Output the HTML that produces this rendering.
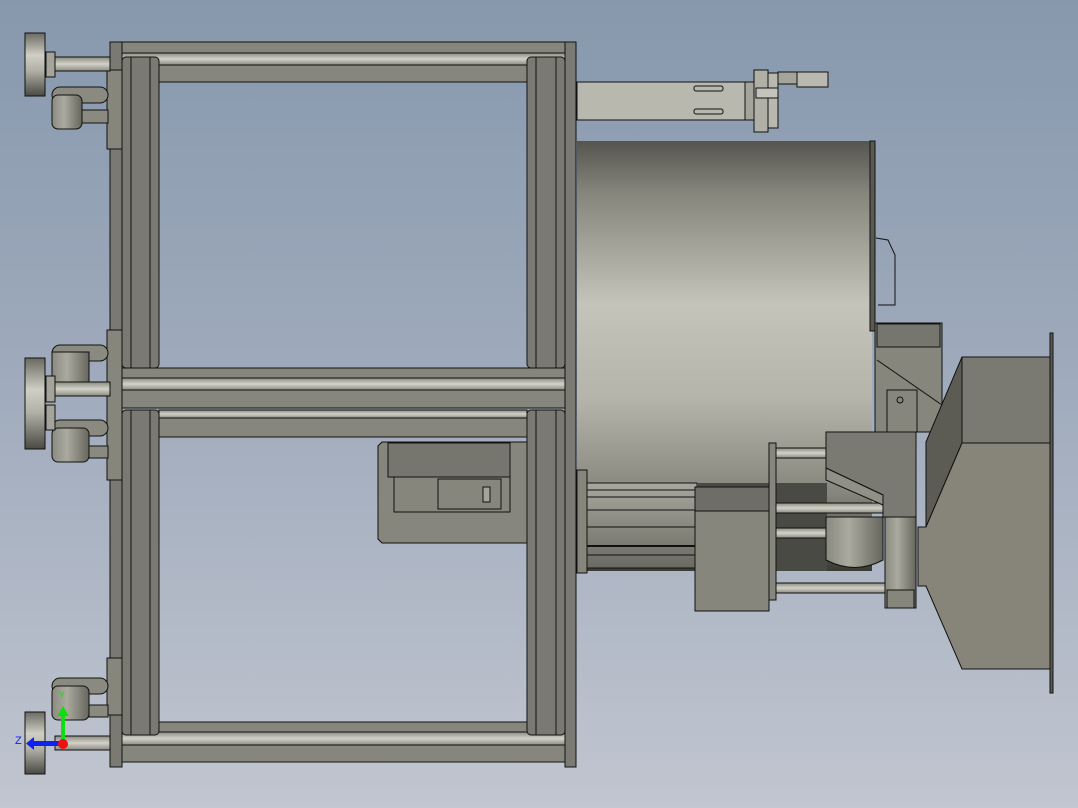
<!DOCTYPE html>
<html><head><meta charset="utf-8"><style>
html,body{margin:0;padding:0;width:1078px;height:808px;overflow:hidden}
svg{display:block}
text{font-family:"Liberation Sans",sans-serif}
</style></head><body>
<svg width="1078" height="808" viewBox="0 0 1078 808" xmlns="http://www.w3.org/2000/svg">
<defs>
<linearGradient id="bg" x1="0" y1="0" x2="0" y2="1">
<stop offset="0" stop-color="#8798ad"/><stop offset="0.5" stop-color="#a1acbd"/><stop offset="1" stop-color="#c1c6d0"/></linearGradient>
<linearGradient id="drum" x1="0" y1="0" x2="0" y2="1">
<stop offset="0" stop-color="#55554f"/><stop offset="0.12" stop-color="#85857c"/><stop offset="0.38" stop-color="#c4c4ba"/><stop offset="0.6" stop-color="#b4b4aa"/><stop offset="0.82" stop-color="#86867d"/><stop offset="1" stop-color="#3c3c36"/></linearGradient>
<linearGradient id="tubeH" x1="0" y1="0" x2="0" y2="1">
<stop offset="0" stop-color="#8a8a80"/><stop offset="0.5" stop-color="#d2d2c8"/><stop offset="1" stop-color="#8a8a80"/></linearGradient>
<linearGradient id="disc" x1="0" y1="0" x2="0" y2="1">
<stop offset="0" stop-color="#6a6a62"/><stop offset="0.35" stop-color="#cfcfc5"/><stop offset="0.6" stop-color="#b0b0a6"/><stop offset="1" stop-color="#4a4a44"/></linearGradient>
<linearGradient id="cylV" x1="0" y1="0" x2="1" y2="0">
<stop offset="0" stop-color="#8a8a80"/><stop offset="0.4" stop-color="#aaaa9f"/><stop offset="1" stop-color="#66665e"/></linearGradient>
<linearGradient id="rail" x1="0" y1="0" x2="0" y2="1">
<stop offset="0" stop-color="#a8a89e"/><stop offset="1" stop-color="#6a6a62"/></linearGradient>
</defs>
<rect width="1078" height="808" fill="url(#bg)"/>
<g stroke="#111" stroke-width="1">
<!-- drum -->
<rect x="577" y="141" width="295" height="430" fill="url(#drum)" stroke="none"/>
<rect x="870" y="141" width="5" height="190" fill="#5a5a54"/>
<!-- upper right box behind -->
<rect x="875" y="323" width="67" height="109" fill="#86867c"/>
<rect x="877" y="324" width="63" height="23" fill="#76766e"/>
<line x1="877" y1="360" x2="942" y2="405"/>
<!-- handle -->
<path d="M876 238 L888 240 L895 255 L895 305 L878 305" fill="none"/>
<!-- rails under drum -->
<rect x="587" y="483" width="110" height="85" fill="url(#rail)"/>
<line x1="587" y1="490" x2="697" y2="490"/><line x1="587" y1="497" x2="697" y2="497"/>
<line x1="587" y1="510" x2="697" y2="510"/><line x1="587" y1="527" x2="697" y2="527"/>
<line x1="587" y1="546" x2="697" y2="546" stroke-width="2"/><line x1="587" y1="555" x2="697" y2="555"/>
<rect x="577" y="470" width="10" height="103" fill="#86867c"/>
<rect x="697" y="483" width="130" height="88" fill="#4a4a44" stroke="none"/>
<!-- motor box -->
<rect x="695" y="487" width="74" height="124" fill="#86867c"/>
<rect x="695" y="487" width="74" height="24" fill="#6e6e66"/>
<rect x="769" y="443" width="7" height="157" fill="#86867c"/>
<!-- rods -->
<rect x="776" y="448" width="50" height="10" fill="url(#tubeH)"/>
<rect x="776" y="503" width="110" height="10" fill="url(#tubeH)"/>
<rect x="776" y="528" width="50" height="10" fill="url(#tubeH)"/>
<rect x="776" y="583" width="110" height="10" fill="url(#tubeH)"/>
<!-- cylinders -->
<path d="M826 517 L883 517 L883 560 Q855 575 826 560 Z" fill="url(#cylV)"/>
<rect x="885" y="517" width="31" height="91" fill="url(#cylV)"/>
<rect x="887" y="590" width="27" height="18" fill="#86867c"/>
<!-- hopper -->
<rect x="1050" y="333" width="3" height="360" fill="#5a5a54"/>
<rect x="962" y="357" width="88" height="86" fill="#7a7a72"/>
<polygon points="962,357 926,442 926,527 962,443" fill="#5c5c54"/>
<polygon points="962,443 1050,443 1050,669 962,669 926,586 918,586 918,527 926,527" fill="#87857a"/>
<!-- bracket -->
<rect x="887" y="390" width="30" height="42" fill="#86867c"/>
<circle cx="900" cy="400" r="3" fill="none"/>
<polygon points="826,432 916,432 916,517 883,517 883,495 826,468" fill="#7a7a72"/>
<polygon points="826,468 883,495 883,505 826,480" fill="#909086"/>
<!-- arm -->
<rect x="577" y="82" width="170" height="38" fill="#b8b8ae"/>
<rect x="694" y="86" width="29" height="5" rx="2" fill="none"/>
<rect x="694" y="109" width="29" height="5" rx="2" fill="none"/>
<rect x="745" y="82" width="10" height="38" fill="#a4a49a"/>
<rect x="754" y="70" width="14" height="62" fill="#b0b0a6"/>
<rect x="768" y="73" width="10" height="55" fill="#b8b8ae"/>
<rect x="756" y="88" width="22" height="10" fill="#c4c4ba"/>
<rect x="778" y="72" width="20" height="12" fill="#a4a49a"/>
<rect x="797" y="72" width="31" height="15" fill="#b8b8ae"/>
<!-- control box -->
<path d="M382 442 L527 442 L527 543 L382 543 L378 539 L378 446 Z" fill="#86867c"/>
<rect x="388" y="443" width="122" height="34" fill="#76766e"/>
<rect x="394" y="477" width="116" height="35" fill="#86867c"/>
<rect x="438" y="479" width="63" height="30" fill="#86867c"/>
<rect x="483" y="487" width="7" height="15" fill="#a4a49a"/>
<!-- FRAME -->
<!-- top bars -->
<rect x="122" y="42" width="443" height="11" fill="#86867c"/>
<rect x="122" y="53" width="443" height="12" fill="url(#tubeH)"/>
<rect x="159" y="65" width="368" height="17" fill="#86867c"/>
<!-- middle bars -->
<rect x="122" y="368" width="443" height="10" fill="#86867c"/>
<rect x="122" y="378" width="443" height="12" fill="url(#tubeH)"/>
<rect x="122" y="390" width="443" height="18" fill="#86867c"/>
<rect x="159" y="410" width="368" height="8" fill="url(#tubeH)"/>
<rect x="159" y="418" width="368" height="19" fill="#86867c"/>
<!-- bottom bars -->
<rect x="159" y="722" width="368" height="10" fill="#86867c"/>
<rect x="122" y="732" width="443" height="13" fill="url(#tubeH)"/>
<rect x="122" y="745" width="443" height="17" fill="#86867c"/>
<!-- inner verticals -->
<rect x="122" y="57" width="37" height="311" rx="4" fill="#7a7a72"/>
<line x1="131" y1="57" x2="131" y2="368"/><line x1="150" y1="57" x2="150" y2="368"/>
<rect x="527" y="57" width="38" height="311" rx="4" fill="#7a7a72"/>
<line x1="536" y1="57" x2="536" y2="368"/><line x1="556" y1="57" x2="556" y2="368"/>
<rect x="122" y="410" width="37" height="325" rx="4" fill="#7a7a72"/>
<line x1="131" y1="410" x2="131" y2="735"/><line x1="150" y1="410" x2="150" y2="735"/>
<rect x="527" y="410" width="38" height="325" rx="4" fill="#7a7a72"/>
<line x1="536" y1="410" x2="536" y2="735"/><line x1="556" y1="410" x2="556" y2="735"/>
<!-- outer plates -->
<rect x="110" y="42" width="12" height="725" fill="#7a7a72"/>
<rect x="565" y="42" width="11" height="725" fill="#7a7a72"/>
<rect x="107" y="70" width="15" height="79" fill="#86867c"/>
<rect x="107" y="330" width="15" height="150" fill="#86867c"/>
<rect x="107" y="658" width="15" height="57" fill="#86867c"/>
<!-- left knobs / clips -->
<rect x="52" y="87" width="56" height="16" rx="8" fill="#8a8a80"/>
<rect x="52" y="95" width="30" height="34" rx="6" fill="url(#cylV)"/>
<rect x="82" y="110" width="26" height="13" fill="#8a8a80"/>
<rect x="55" y="57" width="55" height="14" fill="url(#tubeH)"/>
<rect x="46" y="52" width="9" height="25" fill="#a4a49a"/>
<rect x="25" y="33" width="20" height="63" fill="url(#disc)"/>

<rect x="52" y="345" width="56" height="16" rx="8" fill="#8a8a80"/>
<rect x="52" y="352" width="37" height="30" fill="url(#cylV)"/>
<rect x="52" y="420" width="56" height="16" rx="8" fill="#8a8a80"/>
<rect x="52" y="428" width="37" height="34" rx="6" fill="url(#cylV)"/>
<rect x="89" y="446" width="19" height="12" fill="#8a8a80"/>
<rect x="55" y="382" width="55" height="14" fill="url(#tubeH)"/>
<rect x="46" y="376" width="9" height="26" fill="#a4a49a"/>
<rect x="46" y="405" width="9" height="25" fill="#a4a49a"/>
<rect x="25" y="358" width="20" height="91" fill="url(#disc)"/>

<rect x="52" y="678" width="56" height="16" rx="8" fill="#8a8a80"/>
<rect x="52" y="686" width="37" height="34" rx="6" fill="url(#cylV)"/>
<rect x="89" y="705" width="19" height="12" fill="#8a8a80"/>
<rect x="55" y="736" width="55" height="14" fill="url(#tubeH)"/>
<rect x="25" y="712" width="20" height="62" fill="url(#disc)"/>
</g>
<!-- triad -->
<rect x="61" y="715" width="4" height="28" fill="#11dd11"/>
<polygon points="57,716 63,706 69,716" fill="#11dd11"/>
<rect x="34" y="741" width="29" height="5" fill="#1122ee"/>
<polygon points="34,737 26,743.5 34,750" fill="#1122ee"/>
<circle cx="63" cy="744" r="5" fill="#ee1111"/>
<text x="15" y="744" font-size="11" fill="#1122ee">Z</text>
<text x="59" y="698" font-size="9" fill="#11dd11">Y</text>
</svg>
</body></html>
